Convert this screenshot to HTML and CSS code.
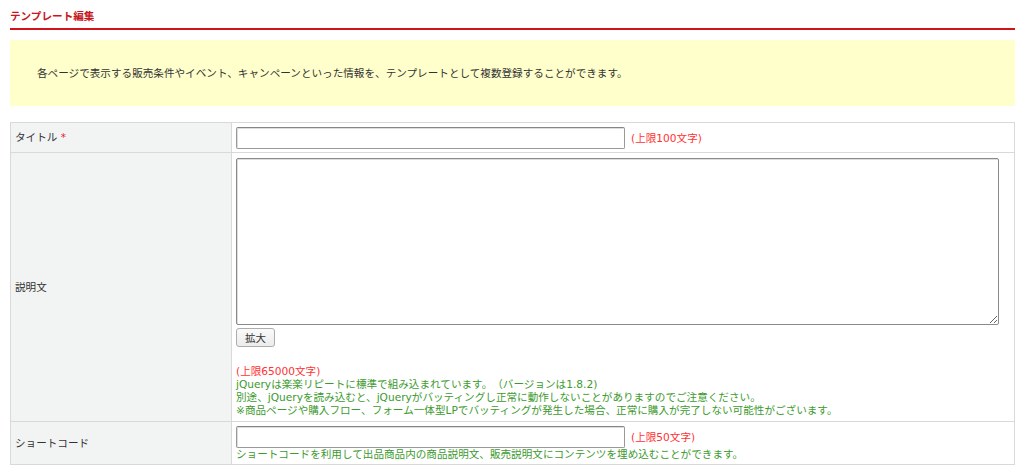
FILE: index.html
```html
<!DOCTYPE html>
<html lang="ja">
<head>
<meta charset="utf-8">
<title>テンプレート編集</title>
<link rel="stylesheet" href="styles.css">
</head>
<body>
<div class="page">
  <h1 class="page-title">テンプレート編集</h1>
  <div class="notice">各ページで表示する販売条件やイベント、キャンペーンといった情報を、テンプレートとして複数登録することができます。</div>
  <table class="form-table">
    <tr class="row-title">
      <th>タイトル <span class="req">*</span></th>
      <td><input type="text" class="text-input"><span class="limit">(上限100文字)</span></td>
    </tr>
    <tr class="row-desc">
      <th>説明文</th>
      <td>
        <textarea class="text-area"></textarea>
        <div class="btn-line"><button class="btn">拡大</button></div>
        <div class="notes">
          <div class="red">(上限65000文字)</div>
          <div class="green">jQueryは楽楽リピートに標準で組み込まれています。（バージョンは1.8.2)</div>
          <div class="green">別途、jQueryを読み込むと、jQueryがバッティングし正常に動作しないことがありますのでご注意ください。</div>
          <div class="green">※商品ページや購入フロー、フォーム一体型LPでバッティングが発生した場合、正常に購入が完了しない可能性がございます。</div>
        </div>
      </td>
    </tr>
    <tr class="row-short">
      <th>ショートコード</th>
      <td>
        <div><input type="text" class="text-input"><span class="limit">(上限50文字)</span></div>
        <div class="green">ショートコードを利用して出品商品内の商品説明文、販売説明文にコンテンツを埋め込むことができます。</div>
      </td>
    </tr>
  </table>
</div>
</body>
</html>
```
FILE: styles.css
```css
html, body {
  margin: 0;
  padding: 0;
  background: #fff;
}
body {
  font-family: "DejaVu Sans", "Noto Sans CJK JP", sans-serif;
  font-size: 10.6px;
  color: #333;
  text-spacing-trim: space-all;
}
.page {
  padding: 0 9px 0 10px;
}
.page-title {
  margin: 0;
  padding-top: 9px;
  height: 19px;
  line-height: 14px;
  font-size: 10.6px;
  font-weight: bold;
  color: #c8161d;
  border-bottom: 2px solid #d0121b;
}
.notice {
  margin-top: 10px;
  height: 66px;
  background: #ffffcc;
  padding-left: 27px;
  line-height: 66px;
  box-sizing: border-box;
  color: #333;
}
.form-table {
  margin-top: 16px;
  width: 100%;
  border-collapse: collapse;
}
.form-table th,
.form-table td {
  border: 1px solid #d9d9d9;
  font-weight: normal;
  text-align: left;
}
.form-table th {
  width: 212px;
  background: #f2f4f4;
  padding: 0 4px;
  vertical-align: middle;
  line-height: 13px;
}
.form-table td {
  padding: 4px 4px 4px 4px;
  vertical-align: top;
  line-height: 13px;
}
.req {
  color: #e8202a;
}
.row-title td {
  height: 22px;
  padding-top: 4px;
  padding-bottom: 3px;
}
.text-input {
  box-sizing: border-box;
  width: 389px;
  height: 22px;
  margin: 0;
  padding: 1px 3px;
  border: 1px solid #999;
  border-top-color: #858585;
  border-radius: 2px;
  box-shadow: inset 1px 1px 0 #ddd;
  vertical-align: middle;
  font-size: 10.5px;
}
.limit {
  color: #ff3333;
  margin-left: 6px;
  vertical-align: middle;
}
.text-area {
  display: block;
  box-sizing: border-box;
  width: 763px;
  height: 167px;
  margin: 1px 0 0 0;
  border: 1px solid #8a8a8a;
  border-radius: 2px;
  box-shadow: inset 1px 1px 0 #ddd;
  resize: both;
}
.btn-line {
  margin-top: 3px;
  height: 20px;
}
.btn {
  box-sizing: border-box;
  width: 39px;
  height: 19px;
  padding: 0;
  margin: 0;
  border: 1px solid #adadad;
  border-radius: 3px;
  background: linear-gradient(#fafafa, #ececec);
  font-family: "Noto Sans CJK JP", sans-serif;
  font-size: 10.5px;
  color: #333;
  line-height: 16px;
}
.notes {
  margin-top: 17px;
}
.red {
  color: #ff3333;
}
.green {
  color: #3c9a2e;
}
.row-short td {
  padding-top: 4px;
  padding-bottom: 3px;
}
```
